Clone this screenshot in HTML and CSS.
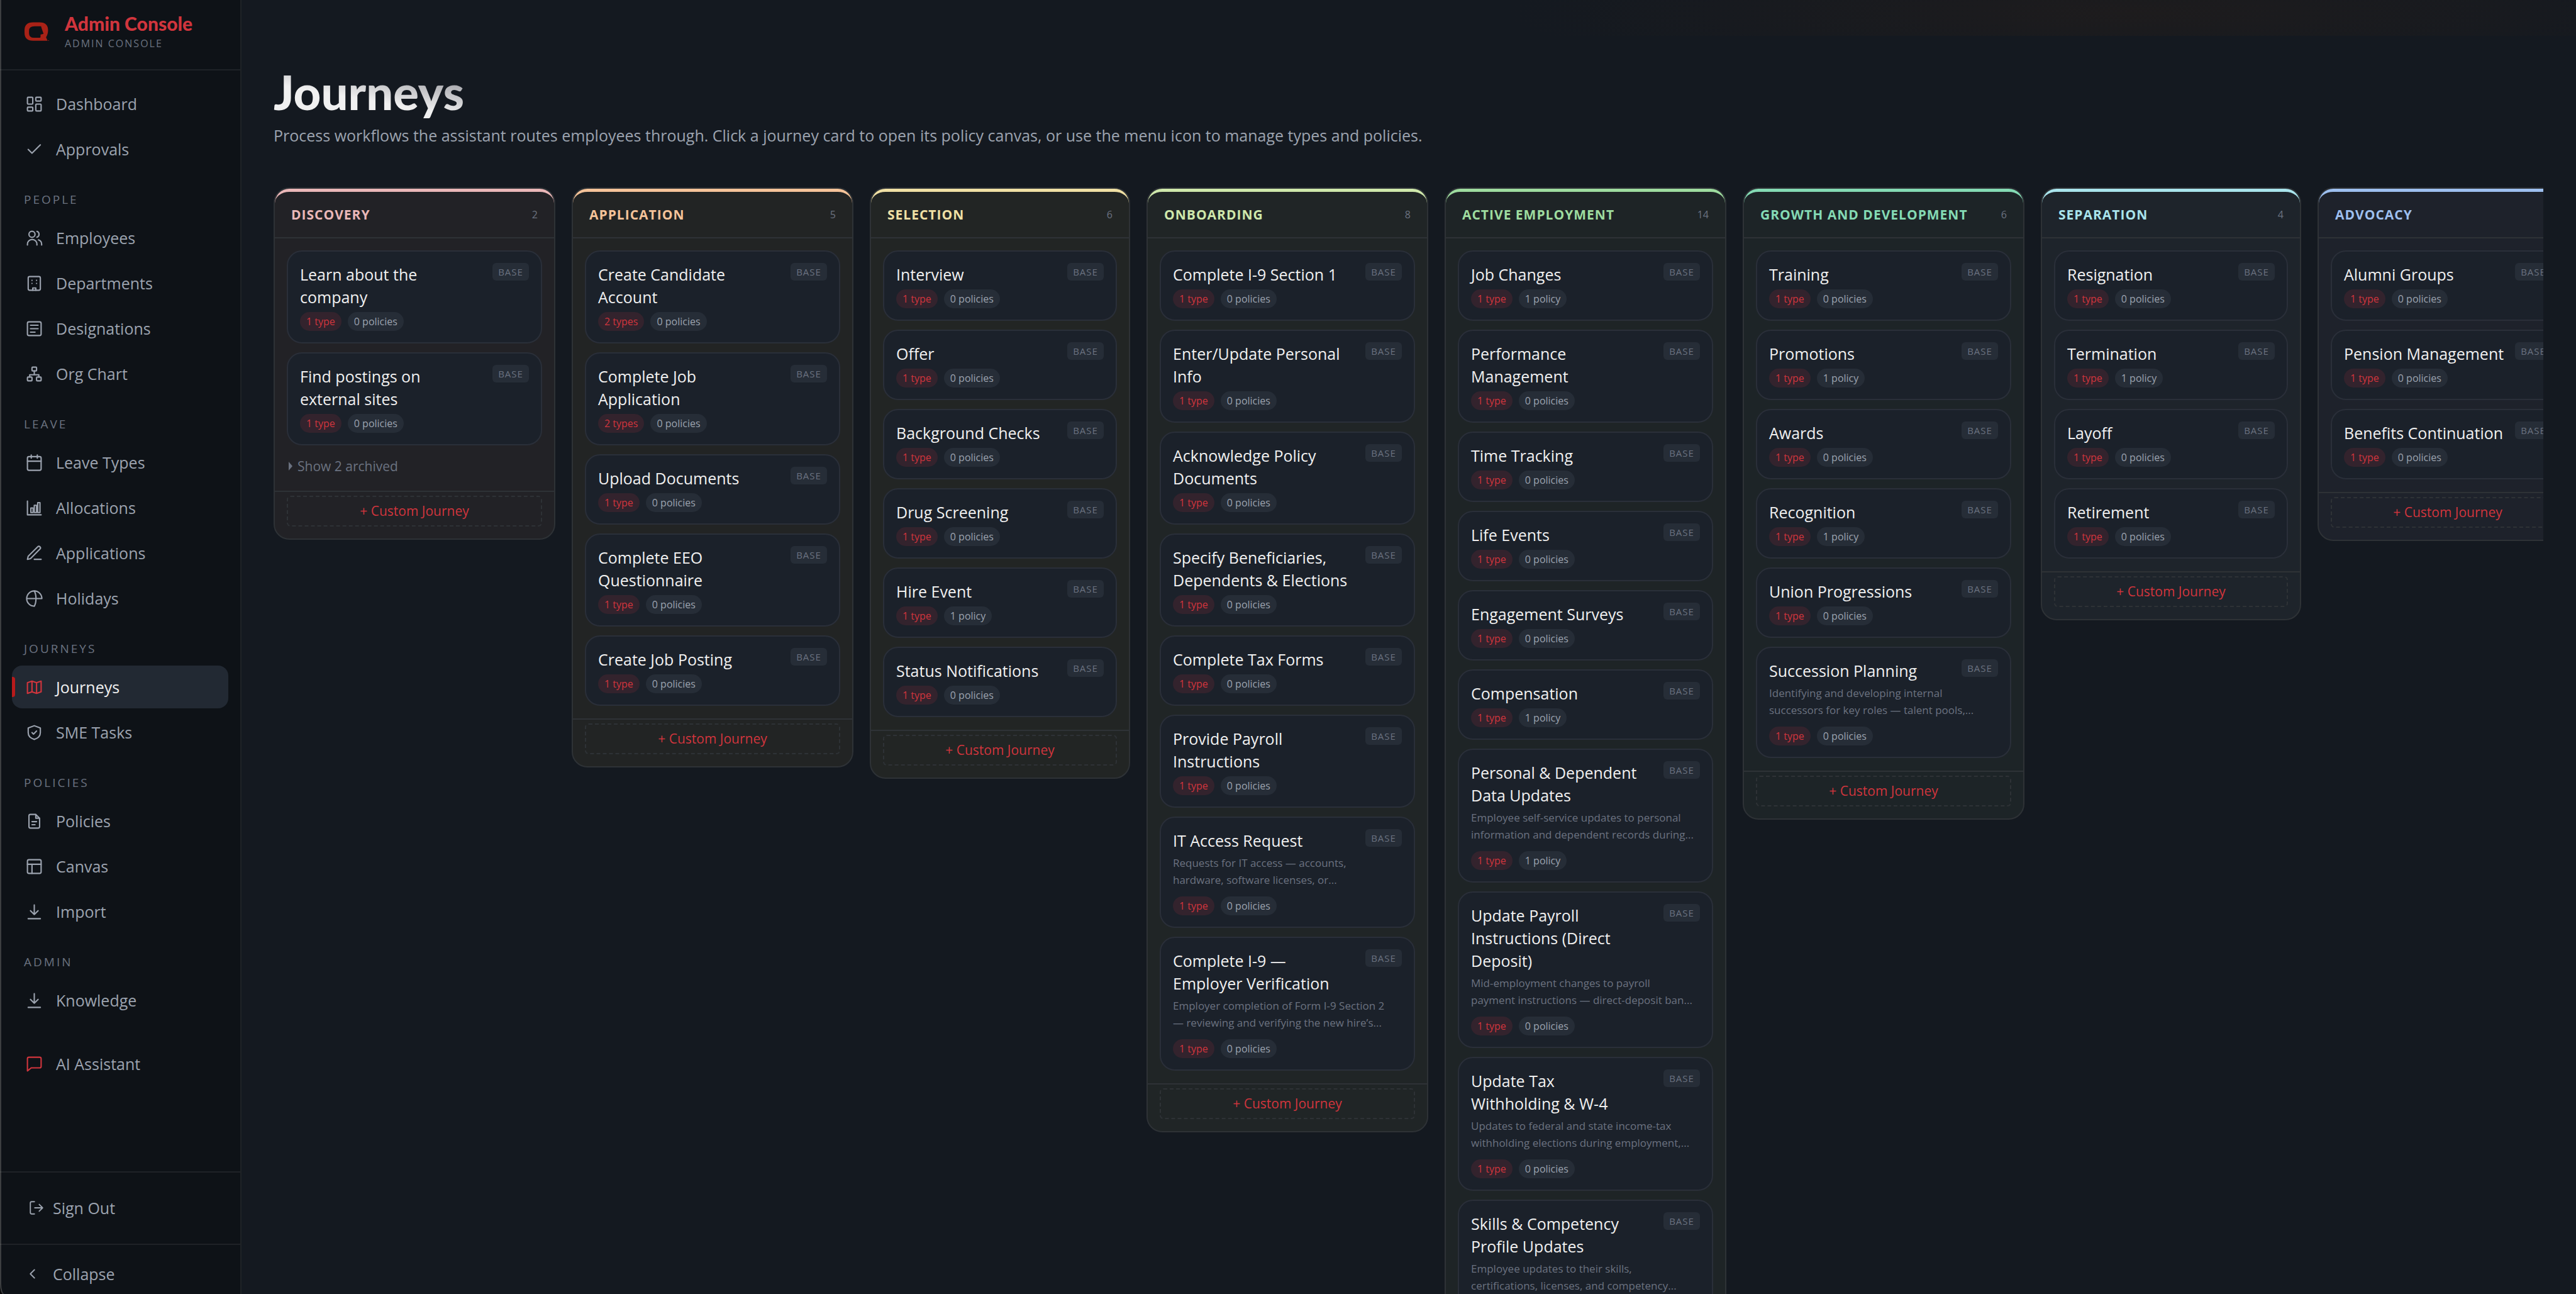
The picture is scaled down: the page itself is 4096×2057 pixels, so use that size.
FILE: index.html
```html
<!DOCTYPE html>
<html lang="en">
<head>
  <meta charset="UTF-8">
  <meta name="viewport" content="width=device-width, initial-scale=1.0">
  <title>Journeys - Admin Console</title>
  <link rel="stylesheet" href="styles.css">
</head>
<body>
  <!-- Sidebar -->
  <aside class="sidebar">
    <div class="brand">
      <svg class="logo" viewBox="0 0 49 38"><path fill-rule="evenodd" d="M17 0H30Q47 0 47 16Q47 24 43 30L46 37H17Q0 37 0 21V16Q0 0 17 0zM20 8Q9 8 9 17V22Q9 31 19 31H30Q32 31 32 29V24.500L38 23L34.500 13L33 8z"/><path d="M47 36h2v1h-2z"/></svg>
      <div>
        <div class="brand-name">Admin Console</div>
        <div class="brand-sub">ADMIN CONSOLE</div>
      </div>
    </div>

    <nav class="nav">
      <a href="#dashboard"><svg viewBox="0 0 24 24"><rect x="3" y="3" width="7" height="9" rx="1"/><rect x="14" y="3" width="7" height="5" rx="1"/><rect x="14" y="12" width="7" height="9" rx="1"/><rect x="3" y="16" width="7" height="5" rx="1"/></svg>Dashboard</a>
      <a href="#approvals"><svg viewBox="0 0 24 24"><path d="M20 6L9 17l-5-5"/></svg>Approvals</a>

      <h2>PEOPLE</h2>
      <a href="#employees"><svg viewBox="0 0 24 24"><circle cx="9" cy="7" r="4"/><path d="M3 21v-1a6 6 0 0 1 12.500 0v1M15.500 3.200a4 4 0 0 1 0 7.600M17.500 14.300a6 6 0 0 1 4.200 5.700v1"/></svg>Employees</a>
      <a href="#departments"><svg viewBox="0 0 24 24"><rect x="4" y="3" width="16" height="18" rx="2"/><path d="M9 8h.01M15 8h.01M9 12h.01M15 12h.01M10 21v-3h4v3"/></svg>Departments</a>
      <a href="#designations"><svg viewBox="0 0 24 24"><rect x="3" y="3" width="18" height="18" rx="2"/><path d="M7 7.500h10M7 12h10M7 16.500h6"/></svg>Designations</a>
      <a href="#org-chart"><svg viewBox="0 0 24 24"><rect x="9" y="3" width="6" height="5" rx="1"/><rect x="3" y="16" width="6" height="5" rx="1"/><rect x="15" y="16" width="6" height="5" rx="1"/><path d="M12 8v5M6 16v-3h12v3"/></svg>Org Chart</a>

      <h2>LEAVE</h2>
      <a href="#leave-types"><svg viewBox="0 0 24 24"><rect x="3" y="4" width="18" height="18" rx="2"/><path d="M8 2v4M16 2v4M3 10h18"/></svg>Leave Types</a>
      <a href="#allocations"><svg viewBox="0 0 24 24"><path d="M3 3v18h18"/><rect x="7.500" y="12" width="3" height="6"/><rect x="12" y="8.500" width="3" height="9.500"/><rect x="16.500" y="5" width="3" height="13"/></svg>Allocations</a>
      <a href="#applications"><svg viewBox="0 0 24 24"><path d="M12 20h9M16.500 3.500a2.120 2.120 0 0 1 3 3L7 19l-4 1 1-4z"/></svg>Applications</a>
      <a href="#holidays"><svg viewBox="0 0 24 24"><path d="M22 12A10 10 0 1 0 12 22M2 12h20M12 2c3 5 3 15 0 20"/></svg>Holidays</a>

      <h2>JOURNEYS</h2>
      <a href="#journeys" class="active"><svg viewBox="0 0 24 24"><path d="M3 6l6-2 6 2 6-2v14l-6 2-6-2-6 2zM9 4v14M15 6v14"/></svg>Journeys</a>
      <a href="#sme-tasks"><svg viewBox="0 0 24 24"><path d="M12 3l8 3v6c0 4.500-3 7.500-8 9-5-1.500-8-4.500-8-9V6zM9 12l2 2 4-4"/></svg>SME Tasks</a>

      <h2>POLICIES</h2>
      <a href="#policies"><svg viewBox="0 0 24 24"><path d="M14 3H7a2 2 0 0 0-2 2v14a2 2 0 0 0 2 2h10a2 2 0 0 0 2-2V8zM14 3v5h5M9 12.500h6M9 16.500h4"/></svg>Policies</a>
      <a href="#canvas"><svg viewBox="0 0 24 24"><rect x="3" y="3" width="18" height="18" rx="2"/><path d="M3 9h18M9 9v12"/></svg>Canvas</a>
      <a href="#import"><svg viewBox="0 0 24 24"><path d="M12 3v12M7 10.500l5 5 5-5M4 21h16"/></svg>Import</a>

      <h2>ADMIN</h2>
      <a href="#knowledge"><svg viewBox="0 0 24 24"><path d="M12 3v12M7 10.500l5 5 5-5M4 21h16"/></svg>Knowledge</a>
      <a href="#assistant" class="assistant"><svg viewBox="0 0 24 24"><path d="M21 15a2 2 0 0 1-2 2H8l-5 4V5a2 2 0 0 1 2-2h14a2 2 0 0 1 2 2z"/></svg>AI Assistant</a>
    </nav>

    <button class="side-btn sign-out"><svg viewBox="0 0 24 24"><path d="M9 3H5a2 2 0 0 0-2 2v14a2 2 0 0 0 2 2h4M16 17l5-5-5-5M21 12H9.500"/></svg>Sign Out</button>
    <button class="side-btn collapse"><svg viewBox="0 0 24 24"><path d="M9 6l-6 6 6 6"/></svg>Collapse</button>
  </aside>

  <!-- Main -->
  <main class="main">
    <h1>Journeys</h1>
    <p class="lead">Process workflows the assistant routes employees through. Click a journey card to open its policy canvas, or use the menu icon to manage types and policies.</p>
    <div class="board" id="board"></div>
  </main>

  <script>
    // [title, types, policies, description]
    const phases = [
      { id: 'discovery', name: 'DISCOVERY', count: 2, archived: 2, cards: [
        ['Learn about the company', 1, 0],
        ['Find postings on external sites', 1, 0]
      ]},
      { id: 'application', name: 'APPLICATION', count: 5, cards: [
        ['Create Candidate Account', 2, 0],
        ['Complete Job Application', 2, 0],
        ['Upload Documents', 1, 0],
        ['Complete EEO Questionnaire', 1, 0],
        ['Create Job Posting', 1, 0]
      ]},
      { id: 'selection', name: 'SELECTION', count: 6, narrow: true, cards: [
        ['Interview', 1, 0],
        ['Offer', 1, 0],
        ['Background Checks', 1, 0],
        ['Drug Screening', 1, 0],
        ['Hire Event', 1, 1],
        ['Status Notifications', 1, 0]
      ]},
      { id: 'onboarding', name: 'ONBOARDING', count: 8, cards: [
        ['Complete I-9 Section 1', 1, 0],
        ['Enter/Update Personal Info', 1, 0],
        ['Acknowledge Policy Documents', 1, 0],
        ['Specify Beneficiaries, Dependents & Elections', 1, 0],
        ['Complete Tax Forms', 1, 0],
        ['Provide Payroll Instructions', 1, 0],
        ['IT Access Request', 1, 0, 'Requests for IT access — accounts,\nhardware, software licenses, or...'],
        ['Complete I-9 — Employer Verification', 1, 0, 'Employer completion of Form I-9 Section 2\n— reviewing and verifying the new hire’s...']
      ]},
      { id: 'employment', name: 'ACTIVE EMPLOYMENT', count: 14, cards: [
        ['Job Changes', 1, 1],
        ['Performance Management', 1, 0],
        ['Time Tracking', 1, 0],
        ['Life Events', 1, 0],
        ['Engagement Surveys', 1, 0],
        ['Compensation', 1, 1],
        ['Personal & Dependent Data Updates', 1, 1, 'Employee self-service updates to personal\ninformation and dependent records during...'],
        ['Update Payroll Instructions (Direct Deposit)', 1, 0, 'Mid-employment changes to payroll\npayment instructions — direct-deposit ban...'],
        ['Update Tax Withholding & W-4', 1, 0, 'Updates to federal and state income-tax\nwithholding elections during employment,...'],
        ['Skills & Competency Profile Updates', 1, 0, 'Employee updates to their skills,\ncertifications, licenses, and competency...']
      ]},
      { id: 'growth', name: 'GROWTH AND DEVELOPMENT', count: 6, cards: [
        ['Training', 1, 0],
        ['Promotions', 1, 1],
        ['Awards', 1, 0],
        ['Recognition', 1, 1],
        ['Union Progressions', 1, 0],
        ['Succession Planning', 1, 0, 'Identifying and developing internal\nsuccessors for key roles — talent pools,...']
      ]},
      { id: 'separation', name: 'SEPARATION', count: 4, narrow: true, cards: [
        ['Resignation', 1, 0],
        ['Termination', 1, 1],
        ['Layoff', 1, 0],
        ['Retirement', 1, 0]
      ]},
      { id: 'advocacy', name: 'ADVOCACY', count: 3, narrow: true, cards: [
        ['Alumni Groups', 1, 0],
        ['Pension Management', 1, 0],
        ['Benefits Continuation', 1, 0]
      ]}
    ];

    function cardHtml([title, types, policies, desc]) {
      return `
        <article class="card">
          <div class="card-head">
            <h3>${title.replace('&', '&amp;')}</h3>
            <span class="base">BASE</span>
          </div>
          ${desc ? `<p class="desc">${desc}</p>` : ''}
          <div class="pills">
            <span class="pill type">${types} ${types === 1 ? 'type' : 'types'}</span>
            <span class="pill">${policies} ${policies === 1 ? 'policy' : 'policies'}</span>
          </div>
        </article>`;
    }

    document.getElementById('board').innerHTML = phases.map(p => `
      <section class="column ${p.id} ${p.narrow ? 'narrow' : ''}">
        <header>
          <h2>${p.name}</h2>
          <span class="count">${p.count}</span>
        </header>
        <div class="cards">
          ${p.cards.map(cardHtml).join('')}
          ${p.archived ? `<button class="archived">Show ${p.archived} archived</button>` : ''}
        </div>
        <footer><button class="custom">+ Custom Journey</button></footer>
      </section>`).join('');
  </script>
</body>
</html>
```
FILE: styles.css
```css
* {
  box-sizing: border-box;
}
html {
  background: #141920;
}
body {
  margin: 0;
  height: 100vh;
  display: flex;
  overflow: hidden;
  background: #050506;
  font-family: "Open Sans", "Noto Sans", sans-serif;
  font-size: 25px;
  color: #f0f0f0;
}
h1, h2, h3, p {
  margin: 0;
}
button {
  font-family: inherit;
  background: none;
  border: 0;
  cursor: pointer;
}
svg {
  flex: none;
  fill: none;
  stroke: currentColor;
  stroke-width: 1.75;
  stroke-linecap: round;
  stroke-linejoin: round;
}

/* Sidebar */
.sidebar {
  flex: none;
  width: 384px;
  display: flex;
  flex-direction: column;
  background: #0e1217;
  border-right: 2px solid #1f2326;
  border-bottom-left-radius: 5px 16px;
  box-shadow: inset 2px 0 0 #3c3e40;
}
.brand {
  display: flex;
  align-items: center;
  gap: 25px;
  padding: 19px 39px 29px;
  border-bottom: 2px solid rgba(255, 255, 255, 0.07);
}
.logo {
  width: 39px;
  height: 31px;
  fill: #a92217;
  stroke: none;
}
.brand-name {
  font-family: Lato, sans-serif;
  font-weight: 900;
  font-size: 30px;
  line-height: 36px;
  color: #d1353d;
}
.brand-sub {
  margin-top: 2px;
  font-size: 16px;
  line-height: 24px;
  letter-spacing: 2px;
  color: #6b7280;
}
.nav {
  flex: 1;
  padding: 19px 19px 0;
}
.nav a {
  position: relative;
  display: flex;
  align-items: center;
  gap: 20px;
  height: 68px;
  margin-bottom: 4px;
  padding-left: 21px;
  border-radius: 16px;
  color: #9ca3af;
  text-decoration: none;
}
.nav svg {
  width: 29px;
  height: 29px;
}
.nav h2 {
  margin: 36px 0 17px;
  padding-left: 19px;
  font-size: 19px;
  font-weight: 400;
  line-height: 20px;
  letter-spacing: 3px;
  color: #6b7280;
}
.nav a.active {
  background: #222933;
  color: #f0f0f0;
  font-weight: 500;
}
.nav a.active::before {
  content: "";
  position: absolute;
  left: 0;
  width: 5px;
  height: 32px;
  border-radius: 0 4px 4px 0;
  background: #b81a1b;
}
.nav a.active svg, .nav .assistant svg {
  color: #d1353d;
}
.nav .assistant {
  margin-top: 33px;
}
.side-btn {
  display: flex;
  align-items: center;
  gap: 13px;
  border-top: 2px solid rgba(255, 255, 255, 0.07);
  font-size: 25px;
  line-height: 32px;
  color: #9ca3af;
}
.side-btn svg {
  width: 26px;
  height: 26px;
}
.sign-out {
  padding: 40px 45px 41px;
}
.collapse {
  padding: 30px 45px 16px;
}

/* Main */
.main {
  flex: 1;
  min-width: 0;
  overflow: hidden;
  padding: 104px 52px 0 51px;
  background: radial-gradient(ellipse 1000px 110px at 81% 20px, rgba(72, 40, 16, 0.18), transparent) no-repeat 0 0 / 100% 57px, #141920;
}
h1 {
  width: max-content;
  font-family: Lato, sans-serif;
  font-weight: 900;
  font-size: 76px;
  line-height: 84px;
  background: linear-gradient(10deg, #f0f0f0 40%, #9a9aa0 85%);
  -webkit-background-clip: text;
  background-clip: text;
  color: transparent;
}
.lead {
  margin-top: 7px;
  line-height: 40px;
  color: #9ca3af;
}
.board {
  display: flex;
  align-items: flex-start;
  gap: 26px;
  margin-top: 63px;
  overflow: hidden;
}

/* Columns */
.column {
  flex: none;
  width: 448px;
  border: 2px solid #2e3236;
  border-radius: 25px;
}
.column.narrow {
  width: 414px;
}
.column header {
  display: flex;
  align-items: center;
  justify-content: space-between;
  height: 79px;
  padding: 0 26px;
  border-top: 5px solid;
  border-bottom: 2px solid #2e3236;
  border-radius: 23px 23px 0 0;
}
.column h2 {
  font-size: 21px;
  font-weight: 700;
  letter-spacing: 1px;
}
.column .count {
  font-size: 16px;
  color: #6b7280;
}
.cards {
  display: flex;
  flex-direction: column;
  gap: 14px;
  padding: 19px 19px 20px;
}
.column footer {
  padding: 6px 19px 19px;
  border-top: 2px solid #2e3236;
}
.discovery { background: #222226; }
.discovery header { border-top-color: #eab7b8; color: #eab7b8; }
.application { background: #222424; }
.application header { border-top-color: #f5c399; color: #f5c399; }
.selection { background: #222524; }
.selection header { border-top-color: #f0e0a4; color: #f0e0a4; }
.onboarding { background: #202526; }
.onboarding header { border-top-color: #cfe8ab; color: #cfe8ab; }
.employment { background: #1e2426; }
.employment header { border-top-color: #9edc9f; color: #9edc9f; }
.growth { background: #1d2427; }
.growth header { border-top-color: #84dab4; color: #84dab4; }
.separation { background: #1e242b; }
.separation header { border-top-color: #a9e4ec; color: #a9e4ec; }
.advocacy { background: #1e222b; }
.advocacy header { border-top-color: #9dbfef; color: #9dbfef; }

/* Cards */
.card {
  padding: 18px 19px;
  background: #1b212a;
  border: 2px solid #2a2f39;
  border-radius: 24px;
}
.card-head {
  display: flex;
  align-items: flex-start;
  justify-content: space-between;
  gap: 8px;
}
.card h3 {
  max-width: 280px;
  font-size: 25px;
  font-weight: 500;
  line-height: 36px;
}
.base {
  flex: none;
  width: 58px;
  border-radius: 6px;
  background: #262d37;
  font-size: 15px;
  line-height: 28px;
  letter-spacing: 1px;
  text-align: center;
  color: #6b7280;
}
.desc {
  margin: 4px 0 13px;
  font-size: 17px;
  line-height: 27px;
  white-space: pre-line;
  color: #6b7280;
}
.pills {
  display: flex;
  gap: 10px;
  margin-top: 6px;
}
.pill {
  padding: 0 10px;
  border-radius: 15px;
  background: #262d37;
  font-size: 16px;
  line-height: 30px;
  color: #9ca3af;
}
.pill.type {
  background: #33232d;
  color: #d1353d;
}
.archived {
  display: flex;
  align-items: center;
  gap: 8px;
  padding: 0 3px;
  font-size: 21px;
  line-height: 38px;
  color: #6b7280;
}
.archived::before {
  content: "";
  border-left: 6px solid;
  border-top: 7px solid transparent;
  border-bottom: 7px solid transparent;
}
.custom {
  display: block;
  width: 100%;
  padding: 0;
  border: 2px dashed #2e3236;
  border-radius: 6px;
  font-size: 21px;
  line-height: 45px;
  color: #d1353d;
}
```
